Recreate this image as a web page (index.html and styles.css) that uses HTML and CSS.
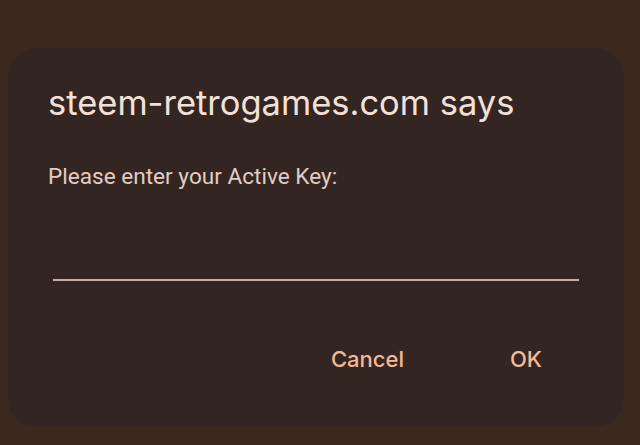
FILE: index.html
```html
<!DOCTYPE html>
<html>
<head>
<meta charset="utf-8">
<link rel="stylesheet" href="styles.css">
</head>
<body>
<div class="dialog">
  <h1 class="title">steem-retrogames.com says</h1>
  <p class="message">Please enter your Active Key:</p>
  <div class="field"></div>
  <div class="actions">
    <span class="btn">Cancel</span>
    <span class="btn">OK</span>
  </div>
</div>
</body>
</html>
```
FILE: styles.css
```css
html, body {
  margin: 0;
  padding: 0;
  background: #3b2920;
  width: 640px;
  height: 445px;
  overflow: hidden;
}
.dialog {
  box-sizing: border-box;
  margin: 48px 0 0 8px;
  width: 616px;
  height: 379px;
  background: #332622;
  border-radius: 28px;
  padding: 35px 45px 0 40px;
  display: flex;
  flex-direction: column;
}
.title {
  margin: 0;
  font-family: Inter, Lato, sans-serif;
  font-weight: 400;
  font-size: 34.5px;
  line-height: 40px;
  color: #f3e0d9;
}
.message {
  margin: 41px 0 0 0;
  font-family: Roboto, sans-serif;
  font-size: 22.6px;
  line-height: 26px;
  color: #e2ccc4;
}
.field {
  margin: 89px 0 0 5px;
  height: 2px;
  background: #c6aea4;
}
.actions {
  display: flex;
  justify-content: flex-end;
  gap: 106px;
  margin: 64px 37px 0 0;
}
.btn {
  font-family: Inter, Lato, sans-serif;
  font-weight: 500;
  font-size: 22px;
  line-height: 28px;
  color: #f6b896;
}
```
